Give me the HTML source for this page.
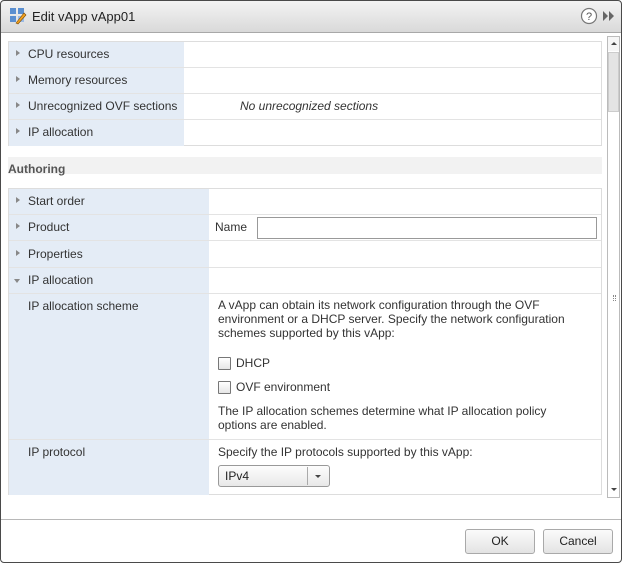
<!DOCTYPE html>
<html><head><style>
*{box-sizing:border-box;margin:0;padding:0}
body{width:622px;height:563px;background:#fff;font-family:"Liberation Sans",Arial,sans-serif;font-size:12px;color:#333;position:relative;overflow:hidden}
.dlg{position:absolute;left:0;top:0;width:622px;height:563px;border-radius:4px;overflow:hidden;background:#fff}
.frame{position:absolute;left:0;top:0;width:622px;height:563px;border:1px solid #4a4a4a;border-radius:4px}
.title{position:absolute;left:0;top:0;width:622px;height:33px;background:linear-gradient(#f4f4f4,#d9d9d9);border-bottom:1px solid #a8a8a8}
.title span{position:absolute;left:32px;top:9px;font-size:13px;color:#222}
.abs{position:absolute}
.tbl{position:absolute;left:8px;border:1px solid #ddd}
.row{position:absolute;left:0;border-bottom:1px solid #e3e3e3}
.lab{position:absolute;left:0;top:0;background:#e4ecf6}
.txt{position:absolute;white-space:nowrap}
.tri{position:absolute;width:0;height:0;border-top:3.5px solid transparent;border-bottom:3.5px solid transparent;border-left:4px solid #888}
.trid{position:absolute;width:0;height:0;border-left:3.5px solid transparent;border-right:3.5px solid transparent;border-top:4px solid #888}
.cb{position:absolute;width:13px;height:13px;border:1px solid #777;background:linear-gradient(#fff,#e6e6e6);border-radius:1px}
.btn{position:absolute;height:25px;border:1px solid #a9a9a9;border-radius:3px;background:linear-gradient(#fbfbfb,#e3e3e3);text-align:center;line-height:23px;font-size:12px;color:#222}
</style></head><body>
<div class="dlg">
<div class="title">
<svg class="abs" style="left:9px;top:7px" width="18" height="18" viewBox="0 0 18 18"><rect x="1" y="1" width="6" height="6" fill="#5b8fd0"/><rect x="9" y="1" width="6" height="6" fill="#5b8fd0"/><rect x="1" y="9" width="6" height="6" fill="#5b8fd0"/><rect x="9" y="9" width="6" height="6" fill="#9bbbe6"/><path d="M7 16 L15 6 L17 8 L9 17 Z" fill="#f0a020" stroke="#7a4a00" stroke-width=".6"/></svg>
<span>Edit vApp vApp01</span>
<svg class="abs" style="left:580px;top:7px" width="18" height="18"><circle cx="9" cy="9" r="7.5" fill="#fff" stroke="#777" stroke-width="1.2"/><text x="9" y="13" font-size="11" text-anchor="middle" fill="#555" font-family="Liberation Sans">?</text></svg>
<svg class="abs" style="left:603px;top:11px" width="12" height="10"><path d="M0 0L5 5L0 10Z M6 0L11 5L6 10Z" fill="#666"/></svg>
</div>

<div class="abs" style="left:607px;top:36px;width:13px;height:462px;border:1px solid #bbb;background:#fff"></div>
<div class="abs" style="left:608px;top:37px;width:11px;height:14px;background:#f6f6f6"></div>
<div class="abs" style="left:611px;top:42px;border-left:3px solid transparent;border-right:3px solid transparent;border-bottom:3px solid #444"></div>
<div class="abs" style="left:608px;top:52px;width:11px;height:60px;background:#e4e4e4;border:1px solid #ccc"></div>
<div class="abs" style="left:611px;top:488px;border-left:3px solid transparent;border-right:3px solid transparent;border-top:3px solid #444"></div>
<div class="abs" style="left:613px;top:295px;width:3px;height:6px;border-left:1px dotted #888;border-right:1px dotted #888"></div>

<div class="tbl" style="top:41px;width:594px;height:105px">
<div class="lab" style="width:175px;height:104px"></div>
<div class="row" style="top:0;width:592px;height:26px"></div>
<div class="row" style="top:26px;width:592px;height:26px"></div>
<div class="row" style="top:52px;width:592px;height:26px"></div>
</div>
<div class="tri" style="left:16px;top:50px"></div><div class="txt" style="left:28px;top:47px">CPU resources</div>
<div class="tri" style="left:16px;top:76px"></div><div class="txt" style="left:28px;top:73px">Memory resources</div>
<div class="tri" style="left:16px;top:102px"></div><div class="txt" style="left:28px;top:99px">Unrecognized OVF sections</div>
<div class="txt" style="left:240px;top:99px;font-style:italic">No unrecognized sections</div>
<div class="tri" style="left:16px;top:128px"></div><div class="txt" style="left:28px;top:125px">IP allocation</div>

<div class="abs" style="left:8px;top:157px;width:594px;height:17px;background:#f2f2f2"></div>
<div class="txt" style="left:8px;top:162px;font-weight:bold;color:#555">Authoring</div>

<div class="tbl" style="top:188px;width:594px;height:307px">
<div class="lab" style="width:200px;height:306px"></div>
<div class="row" style="top:0;width:592px;height:26px"></div>
<div class="row" style="top:26px;width:592px;height:26px"></div>
<div class="row" style="top:52px;width:592px;height:27px"></div>
<div class="row" style="top:79px;width:592px;height:26px"></div>
<div class="row" style="top:105px;width:592px;height:146px"></div>
</div>
<div class="tri" style="left:16px;top:197px"></div><div class="txt" style="left:28px;top:194px">Start order</div>
<div class="tri" style="left:16px;top:223px"></div><div class="txt" style="left:28px;top:220px">Product</div>
<div class="txt" style="left:215px;top:220px">Name</div>
<div class="abs" style="left:257px;top:217px;width:340px;height:22px;border:1px solid #999;background:#fff"></div>
<div class="tri" style="left:16px;top:250px"></div><div class="txt" style="left:28px;top:247px">Properties</div>
<div class="trid" style="left:14px;top:279px"></div><div class="txt" style="left:28px;top:273px">IP allocation</div>
<div class="txt" style="left:28px;top:299px">IP allocation scheme</div>
<div class="abs" style="left:218px;top:298px;width:370px;line-height:14px">A vApp can obtain its network configuration through the OVF<br>environment or a DHCP server. Specify the network configuration<br>schemes supported by this vApp:</div>
<div class="cb" style="left:218px;top:357px"></div><div class="txt" style="left:236px;top:356px">DHCP</div>
<div class="cb" style="left:218px;top:381px"></div><div class="txt" style="left:236px;top:380px">OVF environment</div>
<div class="abs" style="left:218px;top:404px;width:370px;line-height:14px">The IP allocation schemes determine what IP allocation policy<br>options are enabled.</div>
<div class="txt" style="left:28px;top:445px">IP protocol</div>
<div class="txt" style="left:218px;top:445px">Specify the IP protocols supported by this vApp:</div>
<div class="abs" style="left:218px;top:465px;width:112px;height:22px;border:1px solid #999;border-radius:3px;background:linear-gradient(#fdfdfd,#e8e8e8)"></div>
<div class="abs" style="left:307px;top:467px;width:1px;height:18px;background:#aaa"></div>
<div class="txt" style="left:225px;top:469px;color:#222">IPv4</div>
<div class="abs" style="left:315px;top:475px;border-left:3px solid transparent;border-right:3px solid transparent;border-top:3px solid #444"></div>

<div class="abs" style="left:0;top:519px;width:622px;height:1px;background:#b8b8b8"></div>
<div class="btn" style="left:465px;top:529px;width:70px">OK</div>
<div class="btn" style="left:543px;top:529px;width:70px">Cancel</div>
</div>
<div class="frame"></div>
</body></html>
